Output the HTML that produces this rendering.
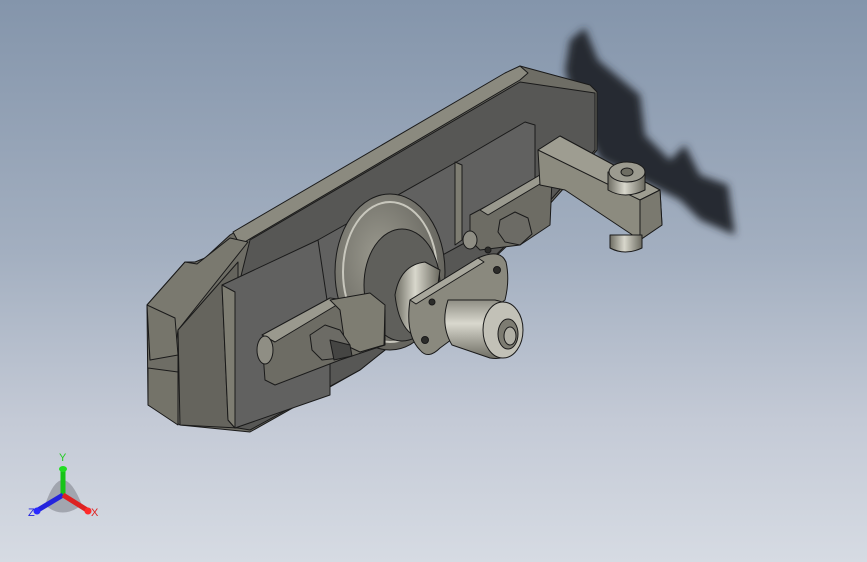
<!DOCTYPE html>
<html><head><style>
html,body{margin:0;padding:0;width:867px;height:562px;overflow:hidden}
body{background:linear-gradient(180deg,#8495ab 0%,#a3afc0 45%,#c4cad6 75%,#d6dbe3 100%)}
</style></head><body>
<svg width="867" height="562" viewBox="0 0 867 562" xmlns="http://www.w3.org/2000/svg" style="position:absolute;left:0;top:0">
<defs>
<filter id="bl" x="-20%" y="-20%" width="140%" height="140%"><feGaussianBlur stdDeviation="4"/></filter>
<linearGradient id="cyl" x1="0" y1="0" x2="1" y2="0"><stop offset="0" stop-color="#6e6d63"/><stop offset=".45" stop-color="#d8d7cc"/><stop offset="1" stop-color="#6a695f"/></linearGradient>
<linearGradient id="cyl2" x1="0" y1="0" x2="0" y2="1"><stop offset="0" stop-color="#8f8e84"/><stop offset=".4" stop-color="#d9d8ce"/><stop offset="1" stop-color="#6f6e64"/></linearGradient>
<radialGradient id="pul" cx=".4" cy=".4" r=".7"><stop offset="0" stop-color="#9a998e"/><stop offset="1" stop-color="#5e5d57"/></radialGradient>
</defs>
<g stroke="#1a1a1a" stroke-width="1" stroke-linejoin="round">
<path filter="url(#bl)" stroke="none" fill="#262930" d="M570 40 L585 28 L598 60 L640 95 L645 135 L670 160 L685 145 L700 175 L728 185 L735 235 L700 220 L680 200 L650 185 L600 160 L575 110 L565 70Z"/>
<path fill="#6e6d65" d="M147 305 L185 262 L195 262 L205 258 L230 235 L505 76 L520 66 L590 85 L597 92 L597 150 L580 170 L540 215 L460 290 L360 370 L250 432 L180 425 L148 405Z"/>
<path fill="#8b8a7f" d="M233 232 L505 73 L520 66 L528 73 L520 80 L248 240 L240 245Z"/>
<path fill="#575755" d="M250 240 L520 82 L595 93 L595 150 L540 212 L460 290 L360 370 L250 430 L238 428 L235 300 Z"/>
<path fill="#7a796f" d="M147 305 L185 262 L197 264 L230 238 L248 242 L178 330 L175 352 L150 360Z"/>
<path fill="#76756b" d="M147 305 L175 318 L178 355 L150 360Z"/>
<path fill="#747369" d="M148 368 L178 372 L178 425 L148 405Z"/>
<path fill="#5f5f5b" d="M178 355 L195 345 L205 360 L195 380 L178 372Z"/>
<path fill="#65645d" d="M178 330 L238 262 L238 428 L180 425Z"/>
<path fill="#616160" d="M222 285 L318 240 L330 245 L330 395 L235 428 L228 420Z"/>
<path fill="#7e7d72" d="M222 285 L235 292 L235 428 L228 420Z"/>
<path fill="#616160" d="M318 240 L460 160 L525 122 L535 125 L535 185 L470 240 L360 300 L330 320Z"/>
<path fill="#7e7d72" d="M455 162 L462 165 L462 240 L455 245Z"/>
<ellipse cx="390" cy="272" rx="55" ry="78" fill="url(#pul)"/>
<ellipse cx="390" cy="272" rx="47" ry="70" fill="none" stroke="#c8c7bd" stroke-width="2"/>
<ellipse cx="402" cy="285" rx="38" ry="56" fill="#5f5f5b"/>
<path fill="#6d6c64" d="M262 340 L330 300 L372 295 L385 310 L385 345 L340 360 L275 385 L265 380Z"/>
<path fill="#9a998e" d="M262 335 L330 298 L345 300 L275 342Z"/>
<path fill="#7e7d72" d="M330 300 L370 293 L385 305 L384 345 L360 352 L345 345 L340 310Z"/>
<ellipse cx="265" cy="350" rx="8" ry="14" fill="#8f8e84"/>
<path fill="#6c6b65" d="M310 335 L325 325 L340 330 L350 345 L340 358 L322 360 L312 350Z"/>
<path fill="#454543" d="M330 340 L350 345 L352 356 L334 360Z"/>
<path fill="#6d6c64" d="M470 215 L545 175 L552 180 L550 225 L520 245 L480 250 L470 240Z"/>
<path fill="#9a998e" d="M480 210 L545 172 L550 178 L488 215Z"/>
<path fill="#6c6b65" d="M500 220 L515 212 L528 218 L532 234 L520 245 L505 242 L498 232Z"/>
<ellipse cx="470" cy="240" rx="7" ry="9" fill="#8f8e84"/>
<path fill="#8c8b7f" d="M538 150 L560 136 L660 190 L662 225 L640 240 L565 190 L540 185Z"/>
<path fill="#9e9d91" d="M538 150 L560 136 L660 190 L640 200Z"/>
<path fill="#7a796f" d="M640 200 L660 190 L662 225 L640 240Z"/>
<path fill="url(#cyl)" d="M608 172 L608 190 Q625 200 645 190 L645 172Z"/>
<ellipse cx="627" cy="172" rx="18" ry="10" fill="#9c9b90"/>
<ellipse cx="627" cy="172" rx="6" ry="4" fill="#6e6d63"/>
<path fill="url(#cyl)" d="M610 235 L610 248 Q625 256 642 248 L642 235Z"/>
<path fill="url(#cyl)" d="M395 295 Q400 265 425 262 L440 270 L430 340 Q400 340 395 295Z"/>
<path fill="#8a897e" d="M410 300 L478 258 Q500 248 506 262 Q510 280 505 300 L440 348 Q428 360 420 350 Q405 335 410 300Z"/>
<path fill="#a8a79c" d="M410 300 L478 258 L484 262 L416 304Z"/>
<circle cx="497" cy="270" r="3.5" fill="#2c2c2a"/>
<circle cx="425" cy="340" r="3.5" fill="#2c2c2a"/>
<circle cx="432" cy="302" r="3" fill="#2c2c2a"/>
<circle cx="488" cy="250" r="3" fill="#2c2c2a"/>
<path fill="url(#cyl2)" d="M448 300 L495 300 Q520 305 520 330 Q518 362 490 358 L452 345 Q440 325 448 300Z"/>
<ellipse cx="503" cy="330" rx="20" ry="28" fill="#c2c1b7"/>
<ellipse cx="508" cy="334" rx="10" ry="15" fill="#7d7c72"/>
<ellipse cx="510" cy="336" rx="6" ry="9" fill="#b0afa5"/>
</g>
<g>
<path d="M45 505 Q62 455 82 505 Q62 520 45 505Z" fill="#7e8088" opacity=".55"/>
<line x1="63" y1="495" x2="63" y2="470" stroke="#17c417" stroke-width="5"/>
<ellipse cx="63" cy="469" rx="4" ry="3" fill="#22dd22"/>
<line x1="63" y1="495" x2="38" y2="510" stroke="#2424dd" stroke-width="5"/>
<circle cx="37" cy="511" r="3.5" fill="#2a2aff"/>
<line x1="63" y1="495" x2="87" y2="510" stroke="#dd2222" stroke-width="5"/>
<circle cx="88" cy="511" r="3.5" fill="#ff2a2a"/>
<text x="59" y="461" font-family="Liberation Sans,sans-serif" font-size="11" fill="#22cc22">Y</text>
<text x="28" y="516" font-family="Liberation Sans,sans-serif" font-size="11" fill="#2222dd">Z</text>
<text x="91" y="516" font-family="Liberation Sans,sans-serif" font-size="11" fill="#dd2222">X</text>
</g>
</svg>
</body></html>
